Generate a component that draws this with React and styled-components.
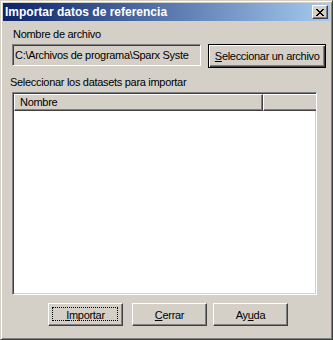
import React from "react";
import styled, { createGlobalStyle } from "styled-components";

const GlobalStyle = createGlobalStyle`
  html, body {
    margin: 0;
    padding: 0;
    background: #d4d0c8;
  }
  body {
    font-family: "Liberation Sans", Arial, sans-serif;
    font-size: 11px;
    letter-spacing: -0.3px;
    color: #000;
  }
`;

const Window = styled.div`
  box-sizing: border-box;
  width: 333px;
  height: 340px;
  display: flex;
  flex-direction: column;
  background: #d4d0c8;
  border: 1px solid;
  border-color: #d4d0c8 #404040 #404040 #d4d0c8;
  box-shadow: inset 1px 1px 0 #ffffff, inset -1px -1px 0 #808080;
  padding: 2px;
`;

const TitleBar = styled.div`
  height: 18px;
  display: flex;
  align-items: center;
  justify-content: space-between;
  padding: 0 2px 0 2px;
  background: linear-gradient(to right, #0a246a, #a6caf0);
  color: #fff;
  font-weight: bold;
  font-size: 12px;
  letter-spacing: 0;
`;

const TitleText = styled.span`
  line-height: 18px;
  white-space: nowrap;
`;

const CloseButton = styled.div`
  box-sizing: border-box;
  width: 16px;
  height: 14px;
  display: flex;
  align-items: center;
  justify-content: center;
  background: #d4d0c8;
  border: 1px solid;
  border-color: #ffffff #404040 #404040 #ffffff;
  box-shadow: inset -1px -1px 0 #808080;
`;

const Body = styled.div`
  flex: 1;
  display: flex;
  flex-direction: column;
  padding: 7px 4px 0 9px;
`;

const Label = styled.div`
  line-height: 13px;
  height: 13px;
  white-space: nowrap;
  margin-left: ${({ $indent }) => $indent || 0}px;
  margin-top: ${({ $top }) => $top || 0}px;
`;

const FileRow = styled.div`
  display: flex;
  align-items: flex-start;
  margin-top: 3px;
  gap: 7px;
`;

const Field = styled.div`
  box-sizing: border-box;
  width: 190px;
  height: 22px;
  border: 1px solid;
  border-color: #808080 #ffffff #ffffff #808080;
  box-shadow: inset 1px 1px 0 #404040, inset -1px -1px 0 #d4d0c8;
  padding: 0 3px 0 2px;
  line-height: 20px;
  white-space: nowrap;
  overflow: hidden;
`;

const Button = styled.div`
  box-sizing: border-box;
  width: ${({ $w }) => $w}px;
  height: ${({ $h }) => $h || 23}px;
  display: flex;
  align-items: center;
  justify-content: center;
  white-space: nowrap;
  background: #d4d0c8;
  border: 1px solid;
  border-color: ${({ $default }) =>
    $default ? "#000" : "#ffffff #404040 #404040 #ffffff"};
  box-shadow: ${({ $default }) =>
    $default
      ? "inset 1px 1px 0 #ffffff, inset -1px -1px 0 #404040, inset -2px -2px 0 #808080"
      : "inset -1px -1px 0 #808080"};
  margin-left: ${({ $ml }) => $ml || 0}px;
  position: relative;
`;

const FocusRing = styled.span`
  position: absolute;
  inset: 3px 4px 4px 3px;
  border: 1px dotted #000;
`;

const ListView = styled.div`
  box-sizing: border-box;
  width: 305px;
  height: 203px;
  margin-top: 3px;
  background: #fff;
  border: 1px solid;
  border-color: #808080 #ffffff #ffffff #808080;
  box-shadow: inset 1px 1px 0 #404040, inset -1px -1px 0 #d4d0c8;
  padding: 1px;
  overflow: hidden;
`;

const Header = styled.div`
  display: flex;
  height: 17px;
`;

const HeaderCell = styled.div`
  box-sizing: border-box;
  width: ${({ $w }) => ($w ? `${$w}px` : "auto")};
  flex: ${({ $w }) => ($w ? "none" : 1)};
  height: 17px;
  background: #d4d0c8;
  border: 1px solid;
  border-color: #ffffff #404040 #404040 #ffffff;
  box-shadow: inset -1px -1px 0 #808080;
  padding-left: 5px;
  line-height: 14px;
  margin-right: ${({ $w }) => ($w ? 0 : -4)}px;
`;

const Footer = styled.div`
  display: flex;
  margin-top: 8px;
  margin-left: 36px;
`;

const U = styled.span`
  text-decoration: underline;
  text-underline-offset: 1px;
`;

export default function App() {
  return (
    <>
      <GlobalStyle />
      <Window>
        <TitleBar>
          <TitleText>Importar datos de referencia</TitleText>
          <CloseButton>
            <svg width="8" height="7" viewBox="0 0 8 7">
              <path
                d="M0 0h2v1h1v1h2V1h1V0h2v1H7v1H6v1H5v1h1v1h1v1h1v1H6V6H5V5H3v1H2v1H0V6h1V5h1V4h1V3H2V2H1V1H0z"
                fill="#000"
              />
            </svg>
          </CloseButton>
        </TitleBar>
        <Body>
          <Label $indent={1}>Nombre de archivo</Label>
          <FileRow>
            <Field>C:\Archivos de programa\Sparx Syste</Field>
            <Button $w={118} $h={24} $default>
              <span>
                <U>S</U>eleccionar un archivo
              </span>
            </Button>
          </FileRow>
          <Label $top={8} $indent={-2}>
            Seleccionar los datasets para importar
          </Label>
          <ListView>
            <Header>
              <HeaderCell $w={249}>Nombre</HeaderCell>
              <HeaderCell />
            </Header>
          </ListView>
          <Footer>
            <Button $w={75}>
              <FocusRing />
              <span>
                <U>I</U>mportar
              </span>
            </Button>
            <Button $w={75} $ml={9}>
              <span>
                <U>C</U>errar
              </span>
            </Button>
            <Button $w={75} $ml={6}>
              <span>
                Ay<U>u</U>da
              </span>
            </Button>
          </Footer>
        </Body>
      </Window>
    </>
  );
}
